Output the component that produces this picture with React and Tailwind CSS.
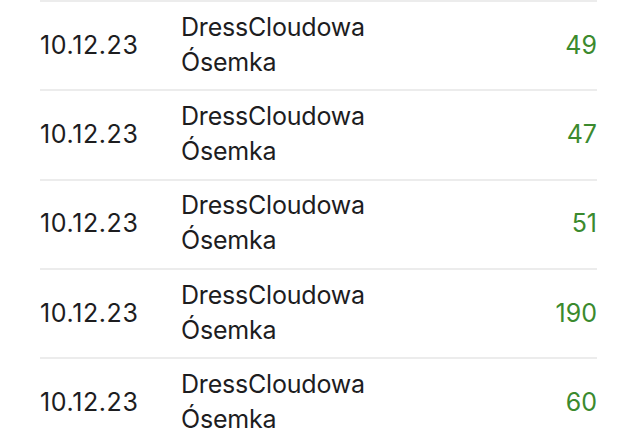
const rows = [
  { date: "10.12.23", name: ["DressCloudowa", "Ósemka"], value: 49 },
  { date: "10.12.23", name: ["DressCloudowa", "Ósemka"], value: 47 },
  { date: "10.12.23", name: ["DressCloudowa", "Ósemka"], value: 51 },
  { date: "10.12.23", name: ["DressCloudowa", "Ósemka"], value: 190 },
  { date: "10.12.23", name: ["DressCloudowa", "Ósemka"], value: 60 },
]

function App() {
  return (
    <div className="w-[640px] h-[444px] overflow-hidden bg-white font-['Inter',sans-serif] text-[#1d1d1f]">
      <div className="ml-[40px] w-[557px]">
        {rows.map((row, i) => (
          <div
            key={i}
            className="h-[89.3px] border-t-2 border-[#ececec] flex items-center"
          >
            <div className="w-[141px] text-[25px] tracking-[0.6px]">{row.date}</div>
            <div className="flex-1 text-[25px] leading-[35px] tracking-[-0.2px] -mt-[2px]">
              <div>{row.name[0]}</div>
              <div>{row.name[1]}</div>
            </div>
            <div className="text-[25px] text-[#3b8a2e]">{row.value}</div>
          </div>
        ))}
      </div>
    </div>
  )
}

export default App
